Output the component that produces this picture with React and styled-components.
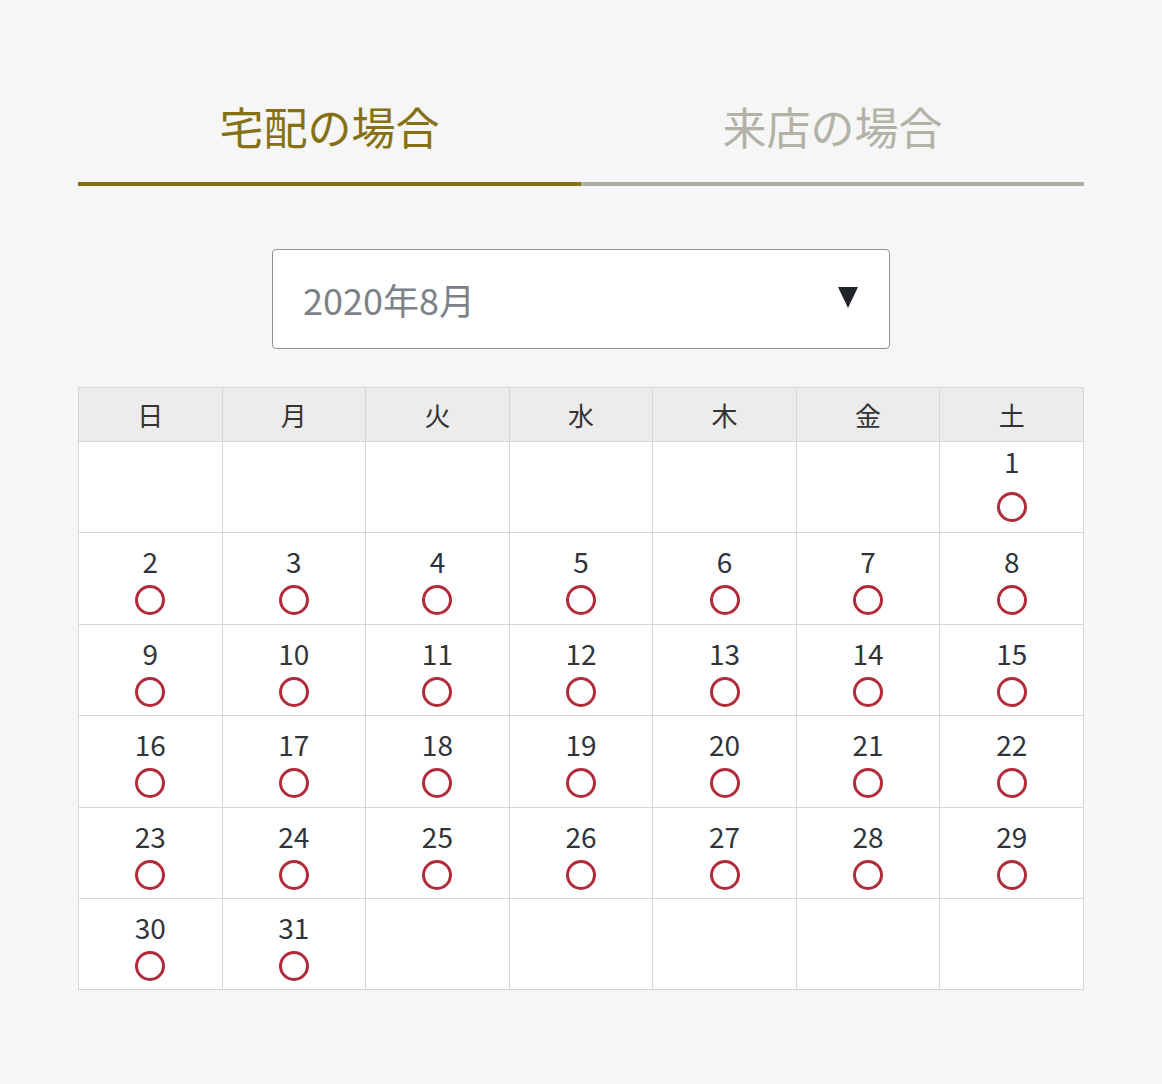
import React from "react";
import styled, { createGlobalStyle } from "styled-components";

const GlobalStyle = createGlobalStyle`
	body {
		margin: 0;
		background: #f6f6f6;
		font-family: "Noto Sans CJK JP", "Noto Sans", sans-serif;
		color: #333;
	}
`;

const Page = styled.div`
	width: 1006px;
	margin: 0 auto;
	padding-top: 104px;
	padding-bottom: 94px;
`;

// tabs
const Tabs = styled.div`
	display: flex;
`;
const Tab = styled.div`
	flex: 1;
	text-align: center;
	font-size: 44px;
	line-height: 44px;
	padding-bottom: 34px;
	color: ${(p) => (p.active ? "#857113" : "#b2b2a6")};
	border-bottom: 4px solid ${(p) => (p.active ? "#857113" : "#adada3")};
	cursor: pointer;
`;

// month select
const SelectWrap = styled.div`
	display: flex;
	justify-content: center;
	margin-top: 63px;
	margin-bottom: 38px;
`;
const Select = styled.div`
	box-sizing: border-box;
	width: 618px;
	height: 100px;
	background: #fff;
	border: 1px solid #8f939a;
	border-radius: 4px;
	display: flex;
	align-items: center;
	justify-content: space-between;
	padding: 0 31px 0 30px;
`;
const SelectText = styled.span`
	font-size: 36px;
	color: #7d8189;
`;
const Arrow = styled.span`
	width: 0;
	height: 0;
	border-left: 10px solid transparent;
	border-right: 10px solid transparent;
	border-top: 21px solid #212428;
	margin-top: -3px;
`;

// calendar
const Table = styled.table`
	width: 100%;
	border-collapse: collapse;
	table-layout: fixed;
	background: #fff;
`;
const HeadRow = styled.tr`
	height: 54px;
`;
const Row = styled.tr`
	height: 91.4px;
`;
const Th = styled.th`
	padding: 0;
	background: #ececec;
	border: 1px solid #d6d6d6;
	font-size: 26px;
	font-weight: 400;
	color: #333;
	line-height: 1;
`;
const Td = styled.td`
	padding: ${(p) => (p.first ? "2px" : "11px")} 0 0;
	border: 1px solid #d6d6d6;
	vertical-align: top;
	text-align: center;
`;
const DayNum = styled.div`
	font-size: 28px;
	line-height: 34px;
	color: #30343a;
`;
const Mark = styled.div`
	width: 24px;
	height: 24px;
	border: 3px solid #b22b3a;
	border-radius: 50%;
	margin: ${(p) => (p.first ? "14px" : "7px")} auto 0;
`;

const WEEK = ["日", "月", "火", "水", "木", "金", "土"];

const buildWeeks = () => {
	const cells = Array(6).fill(null);
	for (let d = 1; d <= 31; d++) cells.push(d);
	while (cells.length % 7) cells.push(null);
	const weeks = [];
	for (let i = 0; i < cells.length; i += 7) weeks.push(cells.slice(i, i + 7));
	return weeks;
};

const App = () => {
	const weeks = buildWeeks();
	return (
		<>
			<GlobalStyle />
			<Page>
				<Tabs>
					<Tab active>宅配の場合</Tab>
					<Tab>来店の場合</Tab>
				</Tabs>
				<SelectWrap>
					<Select>
						<SelectText>2020年8月</SelectText>
						<Arrow />
					</Select>
				</SelectWrap>
				<Table>
					<thead>
						<HeadRow>
							{WEEK.map((w) => (
								<Th key={w}>{w}</Th>
							))}
						</HeadRow>
					</thead>
					<tbody>
						{weeks.map((week, i) => (
							<Row key={i}>
								{week.map((day, j) => (
									<Td key={j} first={i === 0}>
										{day && (
											<>
												<DayNum>{day}</DayNum>
												<Mark first={i === 0} />
											</>
										)}
									</Td>
								))}
							</Row>
						))}
					</tbody>
				</Table>
			</Page>
		</>
	);
};

export default App;
